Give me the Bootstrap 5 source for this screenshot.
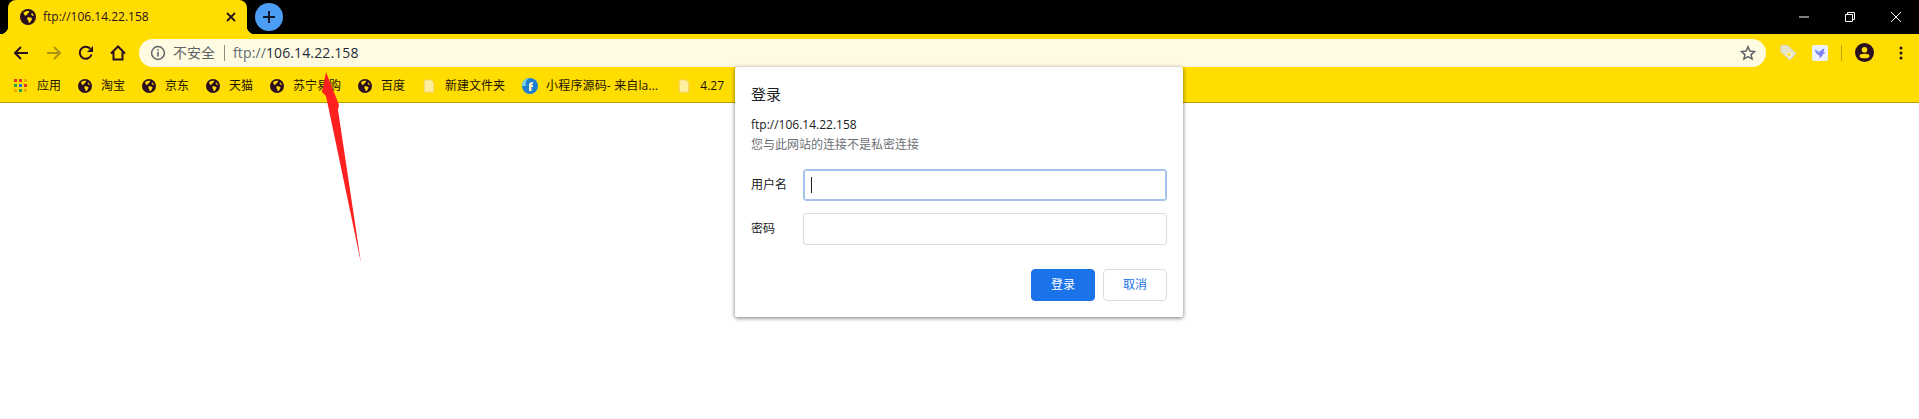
<!DOCTYPE html>
<html lang="zh-CN">
<head>
  <meta charset="UTF-8" />
  <title>ftp://106.14.22.158</title>
  <link href="https://cdn.jsdelivr.net/npm/bootstrap@5.3.0/dist/css/bootstrap.min.css" rel="stylesheet" />
  <style>
    html, body { height: 100%; }
    body {
      font-family: "Open Sans", "Noto Sans CJK SC", sans-serif;
      font-size: 12px;
      color: #202124;
      background: #fff;
      overflow: hidden;
      position: relative;
    }
    /* tab strip */
    .tab-strip { height: 34px; background: #000; padding-left: 8px; }
    .tab-shape {
      width: 239px; height: 34px; background: #ffdd00; color: #2a1020;
      border-radius: 8px 8px 0 0; padding: 0 11px 0 12px; position: relative;
    }
    .tab-shape::before, .tab-shape::after {
      content: ""; position: absolute; bottom: 0; width: 8px; height: 8px;
    }
    .tab-shape::before { left: -8px; background: radial-gradient(circle at 0 0, #000 8px, #ffdd00 8.5px); }
    .tab-shape::after { right: -8px; background: radial-gradient(circle at 100% 0, #000 8px, #ffdd00 8.5px); }
    .tab-title { margin-left: 7px; }
    .tab-close { margin-left: auto; width: 10px; height: 10px; }
    .new-tab {
      width: 28px; height: 28px; border-radius: 50%; background: #4c9df6; margin-left: 8px;
    }
    .win-btns { margin-left: auto; padding-right: 18px; gap: 36px; }
    /* toolbar */
    .tool-row { height: 37px; background: #ffdd00; padding-left: 14px; }
    .nav-ico { width: 16px; height: 16px; flex: none; }
    .nav-group { gap: 16px; width: 125px; flex: none; }
    .addr-bar {
      width: 1627px; height: 28px; flex: none; background: #fffbe3; border-radius: 14px;
      padding: 0 10px 0 11px; font-size: 14px; color: #5f6368;
    }
    .addr-warn { margin-left: 7px; }
    .addr-sep { width: 1px; height: 16px; background: #8a8a80; margin: 0 8px 0 9px; }
    .addr-host { color: #1f2c3a; letter-spacing: .12px; }
    .addr-proto { color: #5f6b73; letter-spacing: .12px; }
    .addr-star { margin-left: auto; }
    .ext-row { flex: 1; padding-left: 14px; }
    .ext-bird { margin-left: 15px; }
    .ext-sep { width: 1px; height: 16px; background: #bda400; margin: 0 13px; }
    /* bookmarks */
    .mark-row {
      height: 32px; background: #ffdd00; border-bottom: 1px solid #b9a100;
      padding: 0 0 1px 14px; gap: 17px; color: #1b1400;
    }
    .mark-item { gap: 9px; }
    .mark-ico { width: 14px; height: 14px; flex: none; }
    .mark-wide { gap: 8px; }
    .mark-wide .mark-ico { width: 16px; height: 16px; }
    .mark-wide span { letter-spacing: .15px; }
    .mark-tail { margin-left: 2px; }
    /* login dialog */
    .login-box {
      position: absolute; left: 735px; top: 67px; width: 448px; height: 250px;
      background: #fff; border-radius: 2px; padding: 19px 16px 16px;
      box-shadow: 0 1px 4px rgba(0,0,0,.55);
    }
    .login-title { font-size: 15px; line-height: 17px; margin: 0 0 12px; font-weight: 400; color: #202124; }
    .login-host { line-height: 20px; }
    .login-note { line-height: 20px; color: #6b6f75; margin-bottom: 14px; }
    .login-row { margin-bottom: 12px; }
    .login-label { width: 52px; flex: none; }
    .login-input {
      width: 364px; height: 32px; border: 1px solid #dadce0; border-radius: 3px; padding: 0; background: #fff; font-size: 12px;
    }
    .login-input.is-focus { border-color: #a4c3ec; box-shadow: 0 0 0 1px #a4c3ec inset; padding-left: 7px; }
    .caret-line { width: 1px; height: 16px; background: #202124; }
    .login-acts { margin-top: 24px; gap: 8px; }
    .act-btn {
      width: 64px; height: 32px; font-size: 12px; padding: 0; border-radius: 4px; line-height: 30px;
    }
    .act-ok { background: #1a73e8; border: 1px solid #1a73e8; color: #fff; }
    .act-no { background: #fff; border: 1px solid #dadce0; color: #1a73e8; }
    .mark-arrow { position: absolute; left: 320px; top: 66px; width: 50px; height: 200px; }
  </style>
</head>
<body>
  <svg width="0" height="0" class="position-absolute">
    <symbol id="globe" viewBox="0 0 16 16">
      <circle cx="8" cy="8" r="8" fill="#2a0f20" />
      <path d="M3.500 3.500C5 2.300 7.500 1.600 9 2 9.500 3 8.700 4 7.600 4.400 7.900 5.600 6.500 6 5.500 6.800 4.300 6.400 3.700 5 3.500 3.500ZM7.500 8.300c1.600-.4 3.300 0 4.300.9.400 1 0 2-1 3-.3.900-1 1.400-1.900 1.700-.4-1-.3-2-.8-2.600C7.300 11 7 9.500 7.500 8.300ZM11.800 4c1 .7 1.700 1.800 2 2.800-1 .2-2-.4-2.600-1.300-.2-.6.1-1 .6-1.500Z" fill="#ffdd00" />
    </symbol>
    <symbol id="folder" viewBox="0 0 14 16">
      <path d="M1.500 1h8L12.500 4v11h-11z" fill="#fdeea0" stroke="#f0d060" />
    </symbol>
    <linearGradient id="birdFill" x1="0" y1="0" x2="1" y2="1">
      <stop offset="0" stop-color="#6fa8f5" />
      <stop offset="1" stop-color="#8a5cf0" />
    </linearGradient>
  </svg>

  <!-- Tab strip -->
  <div class="tab-strip d-flex align-items-center">
    <div class="tab-shape d-flex align-items-center">
      <svg class="nav-ico"><use href="#globe" /></svg>
      <span class="tab-title">ftp://106.14.22.158</span>
      <svg class="tab-close" viewBox="0 0 10 10"><path d="M1 1l8 8M9 1l-8 8" stroke="#2a1020" stroke-width="1.8" /></svg>
    </div>
    <div class="new-tab d-flex align-items-center justify-content-center">
      <svg width="14" height="14" viewBox="0 0 14 14"><path d="M7 1v12M1 7h12" stroke="#10172a" stroke-width="2" /></svg>
    </div>
    <div class="win-btns d-flex align-items-center">
      <svg width="10" height="10" viewBox="0 0 10 10"><path d="M0 5h10" stroke="#fff" /></svg>
      <svg width="10" height="10" viewBox="0 0 10 10"><path d="M.5 2.500h7v7h-7zM2.500 2.500v-2h7v7h-2" fill="none" stroke="#fff" /></svg>
      <svg width="10" height="10" viewBox="0 0 10 10"><path d="M0 0l10 10M10 0L0 10" stroke="#fff" /></svg>
    </div>
  </div>

  <!-- Toolbar -->
  <div class="tool-row d-flex align-items-center">
    <div class="nav-group d-flex align-items-center">
      <svg class="nav-ico" viewBox="0 0 16 16"><path d="M14 8H1M7 2L1 8l6 6" fill="none" stroke="#2a0f20" stroke-width="2" /></svg>
      <svg class="nav-ico" viewBox="0 0 16 16"><path d="M1 8h13M8 2l6 6-6 6" fill="none" stroke="#ad9310" stroke-width="2" /></svg>
      <svg class="nav-ico" viewBox="0 0 16 16"><path d="M13.500 9.500A6 6 0 1 1 12.200 3.700" fill="none" stroke="#2a0f20" stroke-width="2" /><path d="M15 1v6H9z" fill="#2a0f20" /></svg>
      <svg class="nav-ico" viewBox="0 0 16 16"><path d="M1 8.500L8 1.500l7 7M3.500 7v7.500h9V7" fill="none" stroke="#2a0f20" stroke-width="2" /></svg>
    </div>
    <div class="addr-bar d-flex align-items-center">
      <svg class="nav-ico" viewBox="0 0 16 16"><circle cx="8" cy="8" r="6.400" fill="none" stroke="#5f6368" stroke-width="1.500" /><path d="M8 7v4.500M8 4.200v1.600" stroke="#5f6368" stroke-width="1.600" /></svg>
      <span class="addr-warn">不安全</span>
      <span class="addr-sep"></span>
      <span class="addr-proto">ftp://</span><span class="addr-host">106.14.22.158</span>
      <svg class="nav-ico addr-star" viewBox="0 0 16 16"><path d="M8 1.800l1.900 4.200 4.600.5-3.400 3.100 1 4.500L8 11.700l-4.100 2.400 1-4.500L1.500 6.500l4.600-.5z" fill="none" stroke="#5f6368" stroke-width="1.500" /></svg>
    </div>
    <div class="ext-row d-flex align-items-center">
      <svg width="17" height="17" viewBox="0 0 17 17"><path d="M1 1.500h6.500l8.500 8-6 6.500L1 8z" fill="#e8e4c8" stroke="#d8d8d0" /><path d="M10 13.500L6.800 10.600c-1-1.200.9-2.800 2.100-1.300 1-1 3-.2 2.300 1.300z" fill="#ffdd00" stroke="#fff" /></svg>
      <svg class="ext-bird" width="16" height="16" viewBox="0 0 16 16"><rect width="16" height="16" rx="2" fill="#eef1fc" /><path d="M2.500 4.500c2 0 3 1 4 2.500L12.500 3l-1 4.500 2.500 0-3 1.500c-1 2.500-3 4-3.500 4.500 0-1 .5-2 0-3C5 10 3.500 7.500 2.500 4.500z" fill="url(#birdFill)" /></svg>
      <span class="ext-sep"></span>
      <svg width="19" height="19" viewBox="0 0 19 19"><circle cx="9.500" cy="9.500" r="9.500" fill="#2a0f20" /><circle cx="9.500" cy="6.800" r="2.800" fill="#ffdd00" /><ellipse cx="9.500" cy="13" rx="5" ry="2.300" fill="#ffdd00" /></svg>
      <svg class="ms-auto me-3" width="4" height="14" viewBox="0 0 4 14"><circle cx="2" cy="2" r="1.500" fill="#2a0f20" /><circle cx="2" cy="7" r="1.500" fill="#2a0f20" /><circle cx="2" cy="12" r="1.500" fill="#2a0f20" /></svg>
    </div>
  </div>

  <!-- Bookmarks -->
  <div class="mark-row d-flex align-items-center">
    <div class="mark-item d-flex align-items-center">
      <svg class="mark-ico" viewBox="0 0 14 14">
        <rect x="0" y="0" width="3" height="3" fill="#e0352b" /><rect x="5" y="0" width="3" height="3" fill="#e0352b" /><rect x="10" y="0" width="3" height="3" fill="#f2a900" />
        <rect x="0" y="5" width="3" height="3" fill="#2f9e44" /><rect x="5" y="5" width="3" height="3" fill="#2a6fd6" /><rect x="10" y="5" width="3" height="3" fill="#e0352b" />
        <rect x="0" y="10" width="3" height="3" fill="#f2a900" /><rect x="5" y="10" width="3" height="3" fill="#2f9e44" /><rect x="10" y="10" width="3" height="3" fill="#f2a900" />
      </svg>
      <span>应用</span>
    </div>
    <div class="mark-item d-flex align-items-center"><svg class="mark-ico"><use href="#globe" /></svg><span>淘宝</span></div>
    <div class="mark-item d-flex align-items-center"><svg class="mark-ico"><use href="#globe" /></svg><span>京东</span></div>
    <div class="mark-item d-flex align-items-center"><svg class="mark-ico"><use href="#globe" /></svg><span>天猫</span></div>
    <div class="mark-item d-flex align-items-center"><svg class="mark-ico"><use href="#globe" /></svg><span>苏宁易购</span></div>
    <div class="mark-item d-flex align-items-center"><svg class="mark-ico"><use href="#globe" /></svg><span>百度</span></div>
    <div class="mark-item d-flex align-items-center"><svg class="mark-ico"><use href="#folder" /></svg><span>新建文件夹</span></div>
    <div class="mark-item mark-wide d-flex align-items-center">
      <svg class="mark-ico" viewBox="0 0 16 16"><circle cx="8" cy="8" r="8" fill="#1f7fd0" /><path d="M0 8a8 8 0 0 1 8-8c-3 1-5 4-4 8z" fill="#6fd0ee" /><path d="M7 13V7c0-2 1.500-3 4-3v2c-1 0-1.500.3-1.500 1H11v2H9.500v4z" fill="#fff6c0" /></svg>
      <span>小程序源码- 来自la...</span>
    </div>
    <div class="mark-item mark-tail d-flex align-items-center"><svg class="mark-ico"><use href="#folder" /></svg><span>4.27</span></div>
  </div>

  <!-- Annotation arrow over the page -->
  <svg class="mark-arrow" viewBox="0 0 50 200"><path d="M6 6L2 26 6 30 41 197 18 44 19 39z" fill="#ff2020" /></svg>

  <!-- Login dialog -->
  <div class="login-box">
    <h2 class="login-title">登录</h2>
    <div class="login-host">ftp://106.14.22.158</div>
    <div class="login-note">您与此网站的连接不是私密连接</div>
    <div class="login-row d-flex align-items-center">
      <span class="login-label">用户名</span>
      <div class="login-input is-focus d-flex align-items-center"><span class="caret-line"></span></div>
    </div>
    <div class="d-flex align-items-center">
      <span class="login-label">密码</span>
      <input class="login-input" type="password" />
    </div>
    <div class="login-acts d-flex justify-content-end">
      <button class="btn act-btn act-ok" type="button">登录</button>
      <button class="btn act-btn act-no" type="button">取消</button>
    </div>
  </div>

  <script src="https://cdn.jsdelivr.net/npm/bootstrap@5.3.0/dist/js/bootstrap.bundle.min.js"></script>
</body>
</html>
